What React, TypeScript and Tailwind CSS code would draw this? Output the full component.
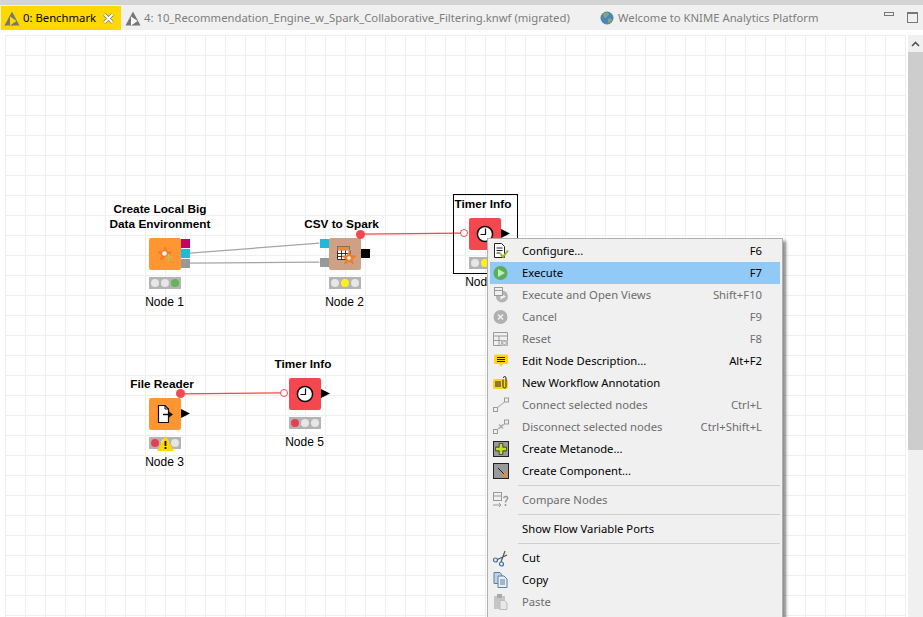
import type { ReactNode } from "react";

const uiFont = "font-['Noto_Sans','Open_Sans',sans-serif]";

function KnimeTriangle({ play }: { play: string }) {
    return (
        <svg width="16" height="15" viewBox="0 0 16 15" className="shrink-0">
            <path d="M8 0.5 L15.5 14.5 H0.5 Z" fill="#777777" />
            <path d="M6 5.5 L12.5 10 L6 14.5 Z" fill={play} />
        </svg>
    );
}

function Tabs() {
    return (
        <div className={`flex h-[25px] items-start bg-[#f0f0f0] text-[11.3px] ${uiFont}`}>
            <div className="ml-px mt-px flex h-6 w-[120px] items-center bg-[#ffd800] pl-[3px] text-black">
                <KnimeTriangle play="#ffd800" />
                <span className="ml-[3px] w-[80px] whitespace-nowrap">0: Benchmark</span>
                <svg width="11" height="11" viewBox="0 0 11 11">
                    <path d="M1.5 1.5 L9.5 9.5 M9.5 1.5 L1.5 9.5" stroke="#777" strokeWidth="3.4" />
                    <path d="M1.5 1.5 L9.5 9.5 M9.5 1.5 L1.5 9.5" stroke="#fff" strokeWidth="2" />
                </svg>
            </div>
            <div className="mt-px flex h-6 items-center pl-[4px] text-[#7d7d7d]">
                <KnimeTriangle play="#ffffff" />
                <span className="ml-[3px] w-[456px] whitespace-nowrap">
                    4: 10_Recommendation_Engine_w_Spark_Collaborative_Filtering.knwf (migrated)
                </span>
                <svg width="14" height="14" viewBox="0 0 14 14" className="shrink-0">
                    <circle cx="7" cy="7" r="6.5" fill="#4a86b8" />
                    <path d="M3 3 C5 1 8 1 9 3 C8 5 7 5 6 7 C4 7 3 5 3 3 Z M8 8 C10 7 12 8 12 9 C11 11 10 12 8 12 Z" fill="#8aa86b" />
                </svg>
                <span className="ml-[4px] whitespace-nowrap">Welcome to KNIME Analytics Platform</span>
            </div>
            <div className="ml-auto flex items-start">
                <div className="mt-[7px] h-[4px] w-[10px] border border-[#777]" />
                <div className="mt-[7px] ml-[13px] mr-[5px] h-[11px] w-[11px] border border-[#777] border-t-2" />
            </div>
        </div>
    );
}

function Clock() {
    return (
        <svg width="32" height="32" viewBox="0 0 32 32">
            <circle cx="16" cy="16" r="7.6" fill="#fff" stroke="#111" strokeWidth="1.5" />
            <path d="M16.5 10.5 V16.5 H11.5" fill="none" stroke="#111" strokeWidth="1.2" />
        </svg>
    );
}

function OutArrow() {
    return (
        <svg width="9" height="9" viewBox="0 0 9 9" className="absolute left-full top-[11px]">
            <path d="M0 0 L9 4.5 L0 9 Z" fill="#000" />
        </svg>
    );
}

function Star({ x, y }: { x: number; y: number }) {
    return (
        <path
            transform={`translate(${x} ${y})`}
            d="M0 -7 L2 -2.4 L7 -2 L3.2 1.2 L4.4 6 L0 3.4 L-4.4 6 L-3.2 1.2 L-7 -2 L-2 -2.4 Z"
            fill="#f47f2c"
            stroke="#e8702a"
            strokeWidth="0.5"
        />
    );
}

type NodeProps = {
    className: string;
    title: ReactNode;
    titleClass: string;
    name: string;
    color: string;
    lights: string[];
    warning?: boolean;
    children: ReactNode;
};

// one workflow node: title, coloured icon with its ports, traffic light, name
function WorkflowNode({ className, title, titleClass, name, color, lights, warning, children }: NodeProps) {
    return (
        <div className={`absolute flex w-8 flex-col items-center font-['Liberation_Sans',sans-serif] text-xs leading-[15px] text-black ${className}`}>
            <div className={`whitespace-nowrap text-center text-[11.8px] font-bold ${titleClass}`}>{title}</div>
            <div className={`relative mt-[6px] h-8 w-8 rounded-[2px] ${color}`}>{children}</div>
            <div className="relative mt-[7px] flex h-3 w-8 items-center justify-center gap-[2px] bg-[#b4b4b4]">
                {lights.map((light, i) => (
                    <div key={i} className="h-[8px] w-[8px] rounded-full" style={{ background: light }} />
                ))}
                {warning && (
                    <svg width="17" height="15" viewBox="0 0 17 15" className="absolute left-[8px] top-[-1px]">
                        <path d="M8.5 0 L17 15 H0 Z" fill="#ffd800" />
                        <path d="M8.5 5 V10 M8.5 11 V13" stroke="#111" strokeWidth="1.8" />
                    </svg>
                )}
            </div>
            <div className="mr-px mt-[6px] whitespace-nowrap">{name}</div>
        </div>
    );
}

const off = "#e6e6e6";

function Workflow() {
    return (
        <>
            <svg className="absolute inset-0 h-full w-full" viewBox="5 35 903 582">
                <path d="M190 253 L320 243" stroke="#a5a5a5" strokeWidth="1.3" />
                <path d="M190 263 L320 262" stroke="#a5a5a5" strokeWidth="1.3" />
                <path d="M360 234 L464 233" stroke="#f5474f" strokeWidth="1.2" />
                <path d="M180 394 L284 393" stroke="#f5474f" strokeWidth="1.2" />
            </svg>

            <WorkflowNode
                className="left-[144px] top-[167px]"
                title={<>Create Local Big<br />Data Environment</>}
                titleClass="mr-[10px]"
                name="Node 1"
                color="bg-[#ff9632]"
                lights={[off, off, "#64b45a"]}
            >
                <svg width="32" height="32" viewBox="0 0 32 32">
                    <Star x={16} y={16} />
                    <circle cx="15.5" cy="15.5" r="2.3" fill="#fff" />
                    <path d="M19.5 16 V23 M16 19.5 H23" stroke="#b5c94a" strokeWidth="1.6" />
                </svg>
                <div className="absolute left-full top-px h-[9px] w-[9px] bg-[#c8005f]" />
                <div className="absolute left-full top-[11px] h-[9px] w-[9px] bg-[#1eb9dc]" />
                <div className="absolute left-full top-[21px] h-[9px] w-[9px] bg-[#999999]" />
            </WorkflowNode>

            <WorkflowNode
                className="left-[324px] top-[182px]"
                title="CSV to Spark"
                titleClass="mr-[7px]"
                name="Node 2"
                color="bg-[#cfa184]"
                lights={[off, "#ffee22", off]}
            >
                <svg width="32" height="32" viewBox="0 0 32 32">
                    <rect x="8.5" y="8.5" width="12" height="4" fill="#f08a32" stroke="#555" strokeWidth="0.6" />
                    <path d="M8.5 12.5 V21.5 H21 V12.5 M12.5 12.5 V21.5 M16.5 12.5 V21.5 M8.5 15.5 H21 M8.5 18.5 H21" fill="#fff" stroke="#222" strokeWidth="0.9" />
                    <Star x={20} y={20} />
                    <circle cx="20" cy="20" r="1.8" fill="#fff" />
                </svg>
                <div className="absolute right-full top-px h-[9px] w-[9px] bg-[#1eb9dc]" />
                <div className="absolute right-full top-[20px] h-[9px] w-[9px] bg-[#999999]" />
                <div className="absolute left-full top-[11px] h-[9px] w-[9px] bg-black" />
                <div className="absolute left-[27px] top-[-8px] h-[9px] w-[9px] rounded-full bg-[#f5474f]" />
            </WorkflowNode>

            <div className="absolute left-[448px] top-[159px] h-[80px] w-[65px] border border-black" />
            <WorkflowNode
                className="left-[464px] top-[162px]"
                title="Timer Info"
                titleClass="mr-[4px]"
                name="Node 4"
                color="bg-[#f5474f]"
                lights={[off, "#ffee22", off]}
            >
                <Clock />
                <OutArrow />
                <div className="absolute left-[-9px] top-[11px] h-2 w-2 rounded-full border border-[#f5474f] bg-white" />
            </WorkflowNode>

            <WorkflowNode
                className="left-[144px] top-[342px]"
                title="File Reader"
                titleClass="mr-[6px]"
                name="Node 3"
                color="bg-[#ff9632]"
                lights={["#e6404f", off, off]}
                warning
            >
                <svg width="32" height="32" viewBox="0 0 32 32">
                    <path d="M9.5 7.5 H16 L19.5 11 V24.5 H9.5 Z" fill="#fff" stroke="#111" strokeWidth="1.2" />
                    <path d="M16 7.5 V11 H19.5" fill="none" stroke="#111" strokeWidth="1" />
                    <path d="M14 16.5 H21" stroke="#111" strokeWidth="1.5" />
                    <path d="M20 13.5 L24 16.5 L20 19.5 Z" fill="#111" />
                </svg>
                <OutArrow />
                <div className="absolute left-[27px] top-[-9px] h-[9px] w-[9px] rounded-full bg-[#f5474f]" />
            </WorkflowNode>

            <WorkflowNode
                className="left-[284px] top-[322px]"
                title="Timer Info"
                titleClass="mr-[4px]"
                name="Node 5"
                color="bg-[#f5474f]"
                lights={["#e6404f", off, off]}
            >
                <Clock />
                <OutArrow />
                <div className="absolute left-[-9px] top-[11px] h-2 w-2 rounded-full border border-[#f5474f] bg-white" />
            </WorkflowNode>
        </>
    );
}

function Icon({ children }: { children: ReactNode }) {
    return (
        <svg width="18" height="18" viewBox="0 0 18 18" className="shrink-0">
            {children}
        </svg>
    );
}

const icons: Record<string, ReactNode> = {
    configure: (
        <Icon>
            <path d="M2.5 1.5 H9.5 L12.5 4.5 V15.5 H2.5 Z" fill="#fff" stroke="#222" />
            <path d="M4.5 6 H10.5 M4.5 8.5 H10.5 M4.5 11 H8.5" stroke="#222" />
            <path d="M8.5 12 L11 15 L16 8.5" fill="none" stroke="#9ab82e" strokeWidth="2" />
        </Icon>
    ),
    execute: (
        <Icon>
            <circle cx="8.5" cy="9" r="7" fill="#58b05a" />
            <path d="M6 5 L13 9 L6 13 Z" fill="#c8e8c0" />
        </Icon>
    ),
    executeOpen: (
        <Icon>
            <circle cx="10" cy="10.5" r="6" fill="#b4b4b4" />
            <path d="M8.5 7.5 L14 10.5 L8.5 13.5 Z" fill="#f0f0f0" />
            <rect x="2.5" y="1.5" width="8" height="8" fill="#f0f0f0" stroke="#999" />
            <path d="M2.5 4.5 H10.5" stroke="#999" />
        </Icon>
    ),
    cancel: (
        <Icon>
            <circle cx="8.5" cy="9" r="7" fill="#b0b0b0" />
            <path d="M6 6.5 L11 11.5 M11 6.5 L6 11.5" stroke="#f0f0f0" strokeWidth="1.6" />
        </Icon>
    ),
    reset: (
        <Icon>
            <path d="M1.5 2.5 H15.5 V15.5 H1.5 Z M1.5 6 H15.5 M1.5 10.5 H15.5 M7 6 V15.5" fill="#f0f0f0" stroke="#9a9a9a" />
            <rect x="9" y="10" width="7" height="6" fill="#b4b4b4" />
            <path d="M11 11.5 L14 14.5 M14 11.5 L11 14.5" stroke="#fff" />
        </Icon>
    ),
    edit: (
        <Icon>
            <path d="M3.5 2.5 H14.5 Q16 2.5 16 4 V10.5 Q16 12 14.5 12 H11 L9 15 L7 12 H3.5 Q2 12 2 10.5 V4 Q2 2.5 3.5 2.5 Z" fill="#ffd21e" />
            <path d="M5 5.5 H13 M5 7.5 H13 M5 9.5 H13" stroke="#222" />
        </Icon>
    ),
    annotation: (
        <Icon>
            <rect x="1" y="5" width="15" height="10" rx="1.5" fill="#ffd21e" />
            <path d="M3 8 H9 M3 10 H9 M3 12 H9" stroke="#222" />
            <path d="M11 5.5 V12.5 Q11 14 12.5 14 Q14 14 14 12.5 V4 Q14 2.5 12.5 2.5 Q11.5 2.5 11.5 4" fill="none" stroke="#222" />
        </Icon>
    ),
    connect: (
        <Icon>
            <rect x="1.5" y="11.5" width="4" height="4" fill="none" stroke="#999" />
            <rect x="12.5" y="2" width="4" height="4" fill="none" stroke="#999" />
            <path d="M5.5 11.5 L12.5 6" stroke="#bbb" strokeWidth="1.2" />
        </Icon>
    ),
    disconnect: (
        <Icon>
            <rect x="1.5" y="11.5" width="4" height="4" fill="none" stroke="#999" />
            <rect x="12.5" y="2" width="4" height="4" fill="none" stroke="#999" />
            <path d="M5.5 11.5 L12.5 6" stroke="#bbb" strokeWidth="1.2" />
            <path d="M7 6.5 L11 10.5 M11 6.5 L7 10.5" stroke="#aaa" strokeWidth="1.4" />
        </Icon>
    ),
    metanode: (
        <Icon>
            <rect x="1.5" y="1.5" width="15" height="15" fill="#9a9a9a" stroke="#222" />
            <path d="M9 3.5 V14.5 M3.5 9 H14.5" stroke="#111" strokeWidth="4.4" />
            <path d="M9 4 V14 M4 9 H14" stroke="#c8e020" strokeWidth="3" />
        </Icon>
    ),
    component: (
        <Icon>
            <rect x="1.5" y="1.5" width="15" height="15" fill="#9a9a9a" stroke="#222" />
            <path d="M6 6 L12 12" stroke="#222" strokeWidth="1" />
            <path d="M14.5 9 V14.5 H9 Z" fill="#f08a32" />
        </Icon>
    ),
    compare: (
        <Icon>
            <rect x="1.5" y="1.5" width="8" height="8" fill="none" stroke="#999" />
            <path d="M1.5 5 H9.5 M1 14 H9 M7 12 L9 14 L7 16" fill="none" stroke="#999" />
            <path d="M11.5 7 Q12.5 5 14.5 5.5 Q16.5 6.5 15 8.5 Q13.5 9.5 13.5 11.5 M13.5 13 V15" fill="none" stroke="#999" strokeWidth="1.5" />
        </Icon>
    ),
    cut: (
        <Icon>
            <circle cx="3.5" cy="11" r="2" fill="none" stroke="#3a6ea5" strokeWidth="1.2" />
            <circle cx="9.5" cy="15" r="2" fill="none" stroke="#3a6ea5" strokeWidth="1.2" />
            <path d="M5.5 10.5 L15 6 M9 13 L13 2" stroke="#555" strokeWidth="1.2" />
        </Icon>
    ),
    copy: (
        <Icon>
            <path d="M2 1.5 H8 L10 4 V12.5 H2 Z" fill="#bcd2e8" stroke="#5c7f9f" />
            <path d="M6 5 H12 L15 8 V16.5 H6 Z" fill="#e6eef6" stroke="#5c7f9f" />
            <path d="M8 9 H13 M8 11 H13 M8 13 H13" stroke="#5c7f9f" />
        </Icon>
    ),
    paste: (
        <Icon>
            <rect x="2" y="3" width="11" height="13" fill="#c6c6c6" />
            <rect x="5" y="1" width="5" height="4" fill="#aaa" />
            <path d="M8 7.5 H12.5 L15 10 V16.5 H8 Z" fill="#e8e8e8" stroke="#bbb" />
        </Icon>
    ),
};

type Item = { label: string; icon?: string; keys?: string; disabled?: boolean; active?: boolean };

function Row({ label, icon, keys, disabled, active }: Item) {
    return (
        <div className={`flex h-[22px] items-center pr-[18px] ${active ? "bg-[#91c9f7]" : ""} ${disabled ? "text-[#6d6d6d]" : "text-black"}`}>
            <div className="flex w-[32px] shrink-0 pl-[2px]">{icon && icons[icon]}</div>
            <span className="whitespace-nowrap">{label}</span>
            {keys && <span className="ml-auto whitespace-nowrap">{keys}</span>}
        </div>
    );
}

function Separator() {
    return <div className="my-[3px] ml-[28px] h-px bg-[#d0d0d0]" />;
}

function ContextMenu() {
    return (
        <div className={`absolute left-[487px] top-[238px] h-[390px] w-[296px] border border-[#b0b0b0] bg-[#f0f0f0] p-[2px] pt-px text-[11.25px] shadow-[3px_3px_3px_rgba(0,0,0,0.45)] ${uiFont}`}>
            <Row label="Configure..." icon="configure" keys="F6" />
            <Row label="Execute" icon="execute" keys="F7" active />
            <Row label="Execute and Open Views" icon="executeOpen" keys="Shift+F10" disabled />
            <Row label="Cancel" icon="cancel" keys="F9" disabled />
            <Row label="Reset" icon="reset" keys="F8" disabled />
            <Row label="Edit Node Description..." icon="edit" keys="Alt+F2" />
            <Row label="New Workflow Annotation" icon="annotation" />
            <Row label="Connect selected nodes" icon="connect" keys="Ctrl+L" disabled />
            <Row label="Disconnect selected nodes" icon="disconnect" keys="Ctrl+Shift+L" disabled />
            <Row label="Create Metanode..." icon="metanode" />
            <Row label="Create Component..." icon="component" />
            <Separator />
            <Row label="Compare Nodes" icon="compare" disabled />
            <Separator />
            <Row label="Show Flow Variable Ports" />
            <Separator />
            <Row label="Cut" icon="cut" />
            <Row label="Copy" icon="copy" />
            <Row label="Paste" icon="paste" disabled />
        </div>
    );
}

export default function App() {
    return (
        <div className="relative flex h-[617px] w-[923px] flex-col overflow-hidden bg-white">
            <div className="h-[5px] bg-[#d4d4d4]" />
            <Tabs />
            <div className="h-[5px]" />
            <div className="flex flex-1 pl-[5px]">
                <div className="relative mr-[2px] flex-1 bg-[linear-gradient(#eeeeee_1px,transparent_1px),linear-gradient(90deg,#eeeeee_1px,transparent_1px)] bg-[size:20px_20px]">
                    <Workflow />
                </div>
                <div className="flex w-[15px] flex-col bg-[#f0f0f0]">
                    <div className="flex h-[17px] items-center justify-center">
                        <svg width="9" height="6" viewBox="0 0 9 6">
                            <path d="M1 5 L4.5 1.5 L8 5" fill="none" stroke="#555" strokeWidth="1.6" />
                        </svg>
                    </div>
                    <div className="h-[398px] bg-[#cdcdcd]" />
                </div>
            </div>
            <ContextMenu />
        </div>
    );
}
